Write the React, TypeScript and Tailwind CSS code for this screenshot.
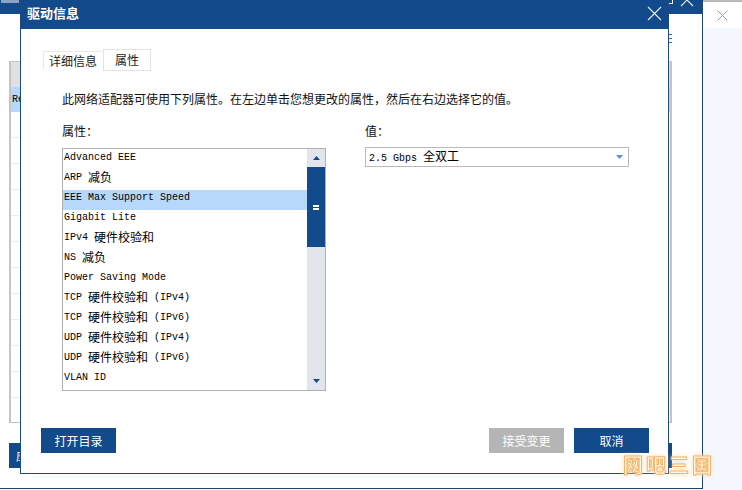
import React from 'react';

const cjkSans = '"Noto Sans CJK SC", sans-serif';

// Each item: [latin part, cjk part, latin suffix]
const items: [string, string, string][] = [
  ['Advanced EEE', '', ''],
  ['ARP ', '减负', ''],
  ['EEE Max Support Speed', '', ''],
  ['Gigabit Lite', '', ''],
  ['IPv4 ', '硬件校验和', ''],
  ['NS ', '减负', ''],
  ['Power Saving Mode', '', ''],
  ['TCP ', '硬件校验和', ' (IPv4)'],
  ['TCP ', '硬件校验和', ' (IPv6)'],
  ['UDP ', '硬件校验和', ' (IPv4)'],
  ['UDP ', '硬件校验和', ' (IPv6)'],
  ['VLAN ID', '', ''],
];

const Triangle: React.FC<{ up?: boolean; color?: string }> = ({ up, color = '#134a8b' }) => (
  <svg width="7" height="4" viewBox="0 0 7 4" fill={color}>
    <path d={up ? 'M3.5 0 L7 4 L0 4 Z' : 'M0 0 L7 0 L3.5 4 Z'} />
  </svg>
);

const Btn: React.FC<{ label: string; disabled?: boolean }> = ({ label, disabled }) => (
  <div className={`w-[75px] h-[25px] flex items-center justify-center text-[12px] text-white ${disabled ? 'bg-[#b5b5b5]' : 'bg-[#134a8b]'}`}>
    {label}
  </div>
);

const Dialog: React.FC = () => (
  <div className="absolute left-[20px] top-0 w-[649px] h-[474px] flex flex-col bg-white border border-t-0 border-[#1c4a80]">
    <div className="h-[29px] shrink-0 flex items-center justify-between pl-[6px] pr-[6px] pb-[3px] bg-[#134a8b] text-white">
      <span className="text-[13px] font-bold">驱动信息</span>
      <svg width="15" height="15" viewBox="0 0 15 15" stroke="#e8eef6" strokeWidth="1.1" fill="none">
        <path d="M1 1 L14 14 M14 1 L1 14" />
      </svg>
    </div>

    <div className="flex-1 flex flex-col pl-[20px] pr-[19px] pb-[20px]">
      <div className="flex items-start h-[42px] pl-[2px] pt-[20px] text-[12px] text-[#222]">
        <div className="w-[59px] h-[18px] mt-[2px] flex items-center justify-center border-t border-l border-[#e8e8e8]">详细信息</div>
        <div className="w-[48px] h-[22px] ml-[1px] flex items-center justify-center border border-[#e2e2e2] bg-white">属性</div>
      </div>

      <div className="pl-[21px] flex-1 flex flex-col">
        <div className="mt-[19px] h-[18px] flex items-center text-[12px] text-[#111] whitespace-nowrap">
          此网络适配器可使用下列属性。在左边单击您想更改的属性，然后在右边选择它的值。
        </div>

        <div className="mt-[15px] flex">
          <div className="w-[303px]">
            <div className="h-[16px] flex items-center text-[12px] text-[#111]">属性：</div>
            <div className="mt-[9px] w-[264px] h-[243px] flex border border-[#b0b0b0]">
              <div className="w-[244px] flex flex-col pt-[1px]">
                {items.map(([a, b, c], i) => (
                  <div
                    key={i}
                    className={`h-[20px] shrink-0 flex items-center pl-[1px] pb-[6px] whitespace-pre font-['Liberation_Mono',monospace] text-[10px] text-black ${i === 2 ? 'bg-[#b5d8fb]' : ''}`}
                  >
                    {a}
                    {b && <span className="text-[12px]" style={{ fontFamily: cjkSans }}>{b}</span>}
                    {c}
                  </div>
                ))}
              </div>
              <div className="w-[18px] flex flex-col bg-[#e2e5ec]">
                <div className="h-[18px] shrink-0 flex items-center justify-center"><Triangle up /></div>
                <div className="h-[80px] shrink-0 bg-[#134a8b] flex items-center justify-center">
                  <div className="w-[6px] h-[5px] border-y-2 border-white" />
                </div>
                <div className="flex-1" />
                <div className="h-[17px] shrink-0 flex items-center justify-center pb-[2px]"><Triangle /></div>
              </div>
            </div>
          </div>

          <div className="w-[264px]">
            <div className="h-[16px] flex items-center text-[12px] text-[#111]">值：</div>
            <div className="mt-[8px] w-[264px] h-[20px] flex items-center justify-between pl-[3px] pr-[5px] pb-[1px] border border-[#b9b9b9]">
              <span className="whitespace-pre font-['Liberation_Mono',monospace] text-[10px] text-black">
                2.5 Gbps <span className="text-[12px]" style={{ fontFamily: cjkSans }}>全双工</span>
              </span>
              <Triangle color="#5b8fe0" />
            </div>
          </div>
        </div>
      </div>

      <div className="flex justify-between">
        <Btn label="打开目录" />
        <div className="flex gap-[10px]">
          <Btn label="接受变更" disabled />
          <Btn label="取消" />
        </div>
      </div>
    </div>
  </div>
);

// The window that sits behind the dialog; only its edges show
const BackWindow: React.FC = () => (
  <div className="absolute left-0 top-0 w-[703px] h-[489px] flex flex-col bg-white border-r border-b border-[#1c4468]">
    <div className="h-[14px] shrink-0 overflow-hidden flex justify-between bg-[#134a8b]">
      <div className="w-[18px] h-[3px] ml-[1px] bg-[#8aa3c4]" />
      <div className="flex items-start gap-[7px] mr-[8px]">
        <div className="w-[8px] h-[4px] border-r border-b border-white" />
        <svg className="mt-[-7px]" width="14" height="14" viewBox="0 0 14 14" stroke="#e8eef6" strokeWidth="1.1" fill="none">
          <path d="M1 1 L13 13 M13 1 L1 13" />
        </svg>
      </div>
    </div>
    <div className="flex-1 flex flex-col pl-[9px] pr-[30px] pb-[20px]">
      <div className="h-[47px] shrink-0 flex flex-col items-end gap-[3px] pt-[20px]">
        <div className="w-[3px] h-[1px] bg-[#2f6db5]" />
        <div className="w-[3px] h-[1px] bg-[#2f6db5]" />
        <div className="w-[3px] h-[1px] bg-[#2f6db5]" />
      </div>
      <div className="h-[362px] overflow-hidden flex flex-col border-l-2 border-r-2 border-b border-[#c4c4c4]">
        <div className="h-[26px] shrink-0 bg-[#e0e0e3] border-t border-[#c4c4c4]" />
        <div className="h-[25px] shrink-0 flex items-center pl-[1px] bg-[#b5d8fb] font-['Liberation_Mono',monospace] text-[10px] text-black">Re</div>
        {Array.from({ length: 12 }).map((_, i) => (
          <div key={i} className="h-[26px] shrink-0 border-b border-[#ececec]" />
        ))}
      </div>
      <div className="mt-auto flex justify-between">
        <div className="w-[75px] h-[25px] flex items-center pl-[7px] bg-[#134a8b] text-[12px] text-white">应</div>
        <div className="w-[75px] h-[25px] bg-[#134a8b]" />
      </div>
    </div>
  </div>
);

const App: React.FC = () => (
  <div className="relative w-[742px] h-[490px] overflow-hidden bg-[#f4f8fe]" style={{ fontFamily: cjkSans }}>
    <div className="ml-[703px] h-[28px] flex items-center justify-center bg-white border-t-2 border-[#b8b8b8]">
      <svg width="11" height="11" viewBox="0 0 11 11" stroke="#9a9a9a" strokeWidth="1" fill="none">
        <path d="M0.5 0.5 L10.5 10.5 M10.5 0.5 L0.5 10.5" />
      </svg>
    </div>
    <BackWindow />
    <Dialog />

    {/* watermark */}
    <div className="absolute left-[623px] top-[454px] text-[20px] font-bold leading-[22px] tracking-[3px] text-[#fff8e8] [-webkit-text-stroke:1px_#f3b56c] [filter:drop-shadow(0_0_2px_#f9d9a8)]">
      网吧三国
    </div>
  </div>
);

export default App;
